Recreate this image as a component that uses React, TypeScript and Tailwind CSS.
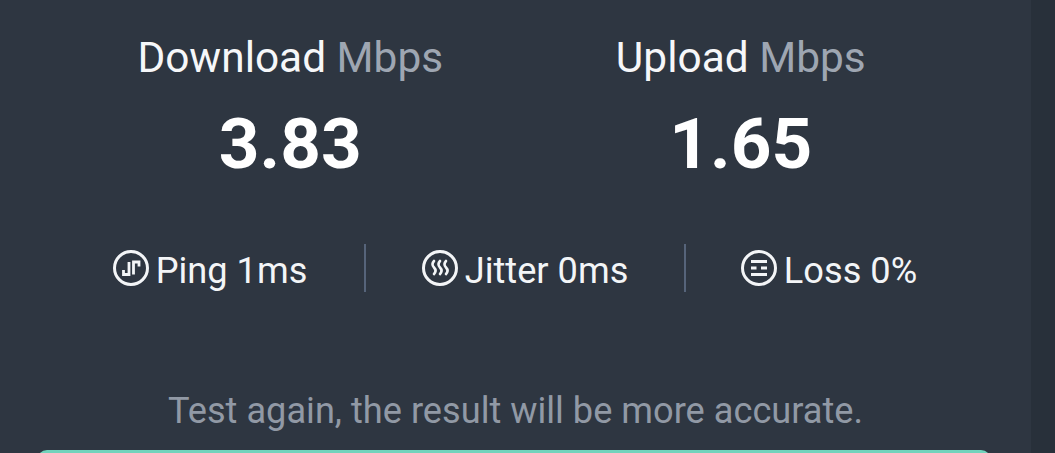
export default function App() {
  const stat = "flex items-center justify-center gap-[7px] text-[36.2px] leading-[42px] text-[#f3f5f7]";
  const wave = "c-2.200 2.400-2.200 4.200 0 6.500 2.200 2.300 2.200 4.100 0 6.500";
  return (
    <div className="h-[453px] w-[1055px] overflow-hidden flex bg-[#28303a] font-['Roboto',sans-serif]">
      <div className="w-[1031px] h-full bg-[#2e3641] flex flex-col">
        <div className="grid grid-cols-2 px-[65px] pt-[35px]">
          <div className="flex flex-col items-center">
            <div className="text-[42.4px] leading-[46px] text-[#f6f7f9]">Download <span className="text-[#9ea6b2]">Mbps</span></div>
            <div className="mt-[21px] text-[71px] leading-[84px] font-bold text-white">3.83</div>
          </div>
          <div className="flex flex-col items-center">
            <div className="text-[42.4px] leading-[46px] text-[#f6f7f9]">Upload <span className="text-[#9ea6b2]">Mbps</span></div>
            <div className="mt-[21px] text-[71px] leading-[84px] font-bold text-white">1.65</div>
          </div>
        </div>
        <div className="mt-[58px] ml-[56px] w-[916px] flex items-center">
          <div className={stat + " w-[308px]"}>
            <svg width="36" height="36" viewBox="0 0 36 36" fill="none" stroke="#f3f5f7" strokeWidth="3"><circle cx="18" cy="18" r="16.500" /><path d="M10.500 20v4.500h5.500V12" strokeWidth="2.800" /><path d="M20.500 24.500V12H26v4.500" strokeWidth="2.800" /></svg>
            <span className="pt-[6px]">Ping 1ms</span>
          </div>
          <div className="w-[2px] h-[48px] bg-[#56647a]" />
          <div className={stat + " w-[318px]"}>
            <svg width="36" height="36" viewBox="0 0 36 36" fill="none" stroke="#f3f5f7" strokeWidth="3"><circle cx="18" cy="18" r="16.500" /><path d={"M12 11" + wave + "M18 11" + wave + "M24 11" + wave} strokeWidth="2.600" strokeLinecap="round" /></svg>
            <span className="pt-[6px]">Jitter 0ms</span>
          </div>
          <div className="w-[2px] h-[48px] bg-[#56647a]" />
          <div className={stat + " flex-1"}>
            <svg width="36" height="36" viewBox="0 0 36 36" fill="none" stroke="#f3f5f7" strokeWidth="3"><circle cx="18" cy="18" r="16.500" /><path d="M10 11.500h16M10 24.500h16M10 18h5.500M20 18h6" strokeWidth="3" /></svg>
            <span className="pt-[6px]">Loss 0%</span>
          </div>
        </div>
        <div className="mt-[98px] text-center text-[36.2px] leading-[42px] text-[#9199a5]">Test again, the result will be more accurate.</div>
        <div className="mt-[18px] ml-[37px] mr-[40px] h-[60px] shrink-0 rounded-[10px] bg-[#72d3bc]" />
      </div>
    </div>
  );
}
